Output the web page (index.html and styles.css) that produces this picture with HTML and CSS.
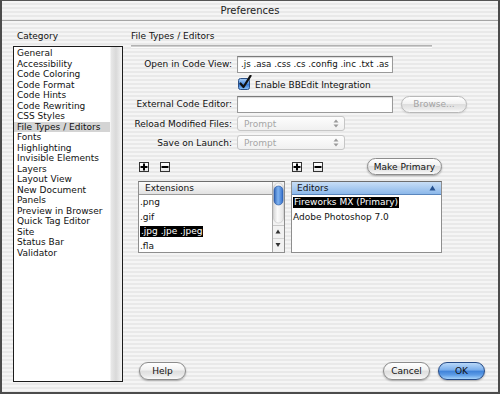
FILE: index.html
```html
<!DOCTYPE html>
<html lang="en">
<head>
  <meta charset="UTF-8" />
  <title>Preferences</title>
  <link rel="stylesheet" href="styles.css">
</head>
<body>
  <div class="window">
    <div class="titlebar">Preferences</div>

    <div class="content">
      <div class="sidebar">
        <div class="caption">Category</div>
        <ul class="category-list">
          <li>General</li>
          <li>Accessibility</li>
          <li>Code Coloring</li>
          <li>Code Format</li>
          <li>Code Hints</li>
          <li>Code Rewriting</li>
          <li>CSS Styles</li>
          <li class="current">File Types / Editors</li>
          <li>Fonts</li>
          <li>Highlighting</li>
          <li>Invisible Elements</li>
          <li>Layers</li>
          <li>Layout View</li>
          <li>New Document</li>
          <li>Panels</li>
          <li>Preview in Browser</li>
          <li>Quick Tag Editor</li>
          <li>Site</li>
          <li>Status Bar</li>
          <li>Validator</li>
        </ul>
      </div>

      <div class="panel">
        <div class="caption">File Types / Editors</div>
        <div class="rule"></div>

        <div class="form">
          <div class="row">
            <span class="row-label">Open in Code View:</span>
            <div class="textfield">.js .asa .css .cs .config .inc .txt .as .</div>
          </div>
          <div class="row">
            <span class="row-label"></span>
            <label class="check">
              <svg width="15" height="15" viewBox="0 0 15 15">
                <defs>
                  <linearGradient id="cbBlue" x1="0" y1="0" x2="0" y2="1">
                    <stop offset="0" stop-color="#a9cdf5"/>
                    <stop offset="0.5" stop-color="#4f8fe0"/>
                    <stop offset="0.51" stop-color="#2f72d2"/>
                    <stop offset="1" stop-color="#8cc3f6"/>
                  </linearGradient>
                </defs>
                <rect x="0.5" y="3.5" width="11" height="11" rx="2" fill="url(#cbBlue)" stroke="#2b4f85"/>
                <path d="M2.5 8.5 L5.5 12 L12.5 0.8" fill="none" stroke="#111" stroke-width="2.2" stroke-linecap="round" stroke-linejoin="round"/>
              </svg>
              Enable BBEdit Integration
            </label>
          </div>
          <div class="row">
            <span class="row-label">External Code Editor:</span>
            <div class="textfield"></div>
            <button class="aqua browse" disabled>Browse...</button>
          </div>
          <div class="row short">
            <span class="row-label">Reload Modified Files:</span>
            <div class="popup">
              Prompt
              <svg width="6" height="9" viewBox="0 0 6 9"><path d="M3 0.5 L5.5 3.5 L0.5 3.5 Z M3 8.5 L5.5 5.5 L0.5 5.5 Z" fill="#9a9a9a"/></svg>
            </div>
          </div>
          <div class="row short">
            <span class="row-label">Save on Launch:</span>
            <div class="popup">
              Prompt
              <svg width="6" height="9" viewBox="0 0 6 9"><path d="M3 0.5 L5.5 3.5 L0.5 3.5 Z M3 8.5 L5.5 5.5 L0.5 5.5 Z" fill="#9a9a9a"/></svg>
            </div>
          </div>
        </div>

        <div class="lists">
          <div class="list-col ext-col">
            <div class="tools">
              <span class="sq-btn"><svg width="8" height="8" viewBox="0 0 8 8"><path d="M4 0.5 V7.5 M0.5 4 H7.5" stroke="#000" stroke-width="2"/></svg></span>
              <span class="sq-btn"><svg width="8" height="8" viewBox="0 0 8 8"><path d="M0.5 4 H7.5" stroke="#000" stroke-width="2"/></svg></span>
            </div>
            <div class="list">
              <div class="list-body">
                <div class="list-head">Extensions</div>
                <div class="list-row">.png</div>
                <div class="list-row">.gif</div>
                <div class="list-row"><span class="sel">.jpg .jpe .jpeg</span></div>
                <div class="list-row">.fla</div>
              </div>
              <svg class="scrollbar" width="12" height="70" viewBox="0 0 12 70">
                <defs>
                  <linearGradient id="track" x1="0" y1="0" x2="1" y2="0">
                    <stop offset="0" stop-color="#d8d8d8"/>
                    <stop offset="0.4" stop-color="#fafafa"/>
                    <stop offset="1" stop-color="#e4e4e4"/>
                  </linearGradient>
                  <linearGradient id="thumb" x1="0" y1="0" x2="1" y2="0">
                    <stop offset="0" stop-color="#2e62b6"/>
                    <stop offset="0.45" stop-color="#7fb3f0"/>
                    <stop offset="1" stop-color="#2f6ccb"/>
                  </linearGradient>
                </defs>
                <rect x="0" y="0" width="12" height="70" fill="#f2f2f2"/>
                <line x1="0.5" y1="0" x2="0.5" y2="70" stroke="#a8a8a8"/>
                <rect x="1.5" y="1" width="10" height="40" rx="5" fill="url(#track)" stroke="#c4c4c4" stroke-width="0.6"/>
                <rect x="2" y="4" width="9" height="19" rx="4.5" fill="url(#thumb)" stroke="#23509a" stroke-width="0.6"/>
                <line x1="1" y1="43.5" x2="12" y2="43.5" stroke="#c8c8c8"/>
                <path d="M6 47.5 L8.5 51.5 L3.5 51.5 Z" fill="#333"/>
                <line x1="1" y1="56.5" x2="12" y2="56.5" stroke="#d4d4d4"/>
                <path d="M6 65 L8.5 61 L3.5 61 Z" fill="#333"/>
              </svg>
            </div>
          </div>

          <div class="list-col ed-col">
            <div class="tools">
              <span class="sq-btn"><svg width="8" height="8" viewBox="0 0 8 8"><path d="M4 0.5 V7.5 M0.5 4 H7.5" stroke="#000" stroke-width="2"/></svg></span>
              <span class="sq-btn"><svg width="8" height="8" viewBox="0 0 8 8"><path d="M0.5 4 H7.5" stroke="#000" stroke-width="2"/></svg></span>
              <button class="aqua primary-btn">Make Primary</button>
            </div>
            <div class="list">
              <div class="list-body">
                <div class="list-head sorted">
                  Editors
                  <svg width="7" height="6" viewBox="0 0 7 6"><path d="M3.5 0.5 L6.5 5.5 L0.5 5.5 Z" fill="#24508f"/></svg>
                </div>
                <div class="list-row"><span class="sel">Fireworks MX (Primary)</span></div>
                <div class="list-row">Adobe Photoshop 7.0</div>
              </div>
            </div>
          </div>
        </div>

        <div class="footer">
          <button class="aqua">Help</button>
          <div class="spacer"></div>
          <button class="aqua">Cancel</button>
          <button class="aqua default">OK</button>
        </div>
      </div>
    </div>
  </div>
</body>
</html>
```

FILE: styles.css
```css
* {
  margin: 0;
  padding: 0;
  box-sizing: border-box;
}

body {
  font-family: "DejaVu Sans", "Liberation Sans", sans-serif;
  font-size: 9px;
  color: #111;
  background: #fff;
}

.window {
  width: 500px;
  height: 394px;
  border-top: 1px solid #555;
  border-left: 2px solid #4c4c4c;
  border-right: 2px solid #4c4c4c;
  border-bottom: 2px solid #4c4c4c;
  background: repeating-linear-gradient(to bottom, #f5f5f5 0, #f5f5f5 2px, #e9e9e9 2px, #e9e9e9 4px);
}

.titlebar {
  height: 20px;
  line-height: 19px;
  text-align: center;
  font-size: 10px;
  color: #222;
  border-bottom: 1px solid #a4a4a4;
}

.content {
  display: flex;
  padding: 8px 0 0 11px;
}

/* category column */
.sidebar {
  width: 110px;
}

.caption {
  height: 14px;
  line-height: 14px;
  padding-left: 4px;
  margin-bottom: 3px;
}

.category-list {
  list-style: none;
  height: 336px;
  padding-top: 1px;
  border: 1px solid #1c1c1c;
  background: linear-gradient(to right, #fff 0, #fff 96px, #e8e8e8 97px, #d9d9d9 102px, #f3f3f3 108px);
}

.category-list li {
  width: 96px;
  height: 10.5px;
  line-height: 10.5px;
  padding-left: 3px;
  white-space: nowrap;
}

.category-list li.current {
  background: #d4d4d4;
}

/* right panel */
.panel {
  width: 357px;
  margin-left: 8px;
}

.panel .caption {
  padding-left: 0;
  margin-bottom: 2px;
}

.rule {
  width: 301px;
  height: 3px;
  border-top: 1px solid #b2b2b2;
  border-bottom: 1px solid #fbfbfb;
  background: #cdcdcd;
}

.form {
  margin-top: 6px;
}

.row {
  display: flex;
  align-items: center;
  height: 20px;
}

.row.short {
  height: 19px;
}

.row-label {
  width: 101px;
  margin-right: 5px;
  text-align: right;
  white-space: nowrap;
}

.textfield {
  width: 156px;
  height: 17px;
  line-height: 15px;
  padding-left: 3px;
  font-size: 8.7px;
  white-space: nowrap;
  overflow: hidden;
  background: #fff;
  border: 1px solid #9a9a9a;
  border-top-color: #7a7a7a;
  box-shadow: inset 0 1px 1px rgba(0, 0, 0, 0.15);
}

.check {
  display: flex;
  align-items: flex-end;
  gap: 2px;
  margin-left: 1px;
  margin-top: -3px;
}

.popup {
  display: flex;
  align-items: center;
  justify-content: space-between;
  width: 108px;
  height: 15px;
  padding: 0 5px 0 6px;
  color: #a6a6a6;
  border: 1px solid #c6c6c6;
  border-radius: 3px;
  background: linear-gradient(#fdfdfd, #f0f0f0);
}

/* aqua buttons */
.aqua {
  font-family: inherit;
  font-size: 9px;
  color: #111;
  height: 18px;
  width: 47px;
  border: 1px solid #8c8c8c;
  border-radius: 9px;
  background: linear-gradient(#ffffff 0, #f1f1f1 45%, #dedede 50%, #eaeaea 80%, #fbfbfb 100%);
  box-shadow: 0 1px 2px rgba(0, 0, 0, 0.3);
}

.aqua.browse {
  width: 66px;
  height: 17px;
  margin-left: 8px;
  color: #a4a4a4;
  border-color: #b8b8b8;
  box-shadow: 0 1px 2px rgba(0, 0, 0, 0.12);
}

.aqua.default {
  margin-left: 8px;
  border-color: #254a86;
  background: linear-gradient(#b9d8f8 0, #78adec 45%, #3e82d8 50%, #5d9ce6 75%, #a6d3fa 100%);
}

/* lists */
.lists {
  display: flex;
  gap: 6px;
  padding-left: 7px;
  margin-top: 5px;
}

.ext-col {
  width: 147px;
}

.ed-col {
  width: 151px;
}

.tools {
  display: flex;
  align-items: center;
  height: 19px;
  padding-left: 1px;
  margin-bottom: 5px;
}

.sq-btn {
  display: flex;
  align-items: center;
  justify-content: center;
  width: 10px;
  height: 10px;
  margin-right: 11px;
  border: 1px solid #333;
  background: linear-gradient(#fff, #e6e6e6);
}

.aqua.primary-btn {
  width: 78px;
  height: 17px;
  margin-left: 33px;
}

.list {
  display: flex;
  height: 72px;
  border: 1px solid #8e8e8e;
  border-top-color: #6e6e6e;
  background: #fff;
}

.list-body {
  flex: 1;
}

.list-head {
  display: flex;
  align-items: center;
  justify-content: space-between;
  height: 13px;
  padding: 0 6px;
  border-bottom: 1px solid #9c9c9c;
  background: linear-gradient(#fbfbfb, #e2e2e2);
}

.list-head.sorted {
  padding: 0 5px 0 5px;
  border-bottom-color: #5a86bd;
  background: linear-gradient(#c8def6, #8cb8ea);
}

.list-row {
  height: 14.5px;
  line-height: 14.5px;
  padding-left: 1px;
  white-space: nowrap;
}

.list-row .sel {
  display: inline-block;
  line-height: 11px;
  padding: 0 1px;
  background: #000;
  color: #fff;
}

.scrollbar {
  display: block;
}

.footer {
  display: flex;
  align-items: center;
  margin-top: 109px;
  padding: 0 3px 0 8px;
}

.spacer {
  flex: 1;
}
```
